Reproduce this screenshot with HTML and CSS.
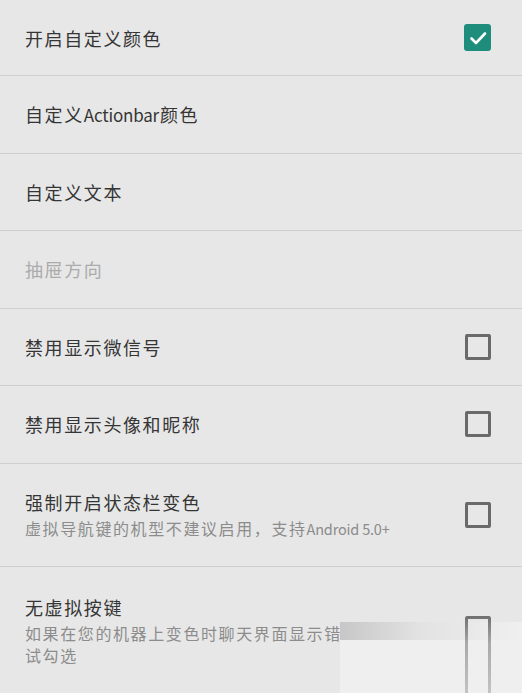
FILE: index.html
```html
<!DOCTYPE html>
<html lang="zh-CN">
<head>
<meta charset="utf-8">
<title>设置</title>
<link rel="stylesheet" href="styles.css">
</head>
<body>
<div class="list">
  <div class="row first">
    <div class="text"><div class="title">开启自定义颜色</div></div>
    <div class="check on">
      <svg viewBox="0 0 26 26" width="26" height="26"><path d="M6.5 13.5 L11 18 L20 8.5" fill="none" stroke="#ffffff" stroke-width="2.6" stroke-linecap="round" stroke-linejoin="round"/></svg>
    </div>
  </div>
  <div class="row">
    <div class="text"><div class="title">自定义<span class="latin">Actionbar</span>颜色</div></div>
  </div>
  <div class="row">
    <div class="text"><div class="title">自定义文本</div></div>
  </div>
  <div class="row">
    <div class="text"><div class="title disabled">抽屉方向</div></div>
  </div>
  <div class="row">
    <div class="text"><div class="title">禁用显示微信号</div></div>
    <div class="check"></div>
  </div>
  <div class="row">
    <div class="text"><div class="title">禁用显示头像和昵称</div></div>
    <div class="check"></div>
  </div>
  <div class="row tall">
    <div class="text">
      <div class="title">强制开启状态栏变色</div>
      <div class="sub">虚拟导航键的机型不建议启用，支持<span class="latin">Android 5.0+</span></div>
    </div>
    <div class="check"></div>
  </div>
  <div class="row last">
    <div class="text">
      <div class="title">无虚拟按键</div>
      <div class="sub narrow">如果在您的机器上变色时聊天界面显示错误，请尝试勾选</div>
    </div>
    <div class="check smear"></div>
  </div>
</div>
<div class="veil"></div>
</body>
</html>
```

FILE: styles.css
```css
html, body {
  margin: 0;
  padding: 0;
  background: #e7e7e7;
  overflow: hidden;
}
body {
  width: 522px;
  height: 693px;
  position: relative;
  font-family: "Noto Sans CJK SC", "Noto Sans", sans-serif;
}
.list {
  display: flex;
  flex-direction: column;
}
.row {
  display: flex;
  align-items: center;
  height: 76.5px;
  padding: 0 31px 0 25px;
  border-bottom: 1px solid #cfcfcf;
  box-sizing: content-box;
}
.row.first {
  height: 75px;
}
.row.tall {
  height: 102px;
}
.row.last {
  height: auto;
  align-items: flex-start;
  padding-top: 27px;
  padding-bottom: 27px;
  border-bottom: none;
}
.text {
  flex: 1;
  min-width: 0;
}
.title {
  font-size: 18px;
  line-height: 26px;
  letter-spacing: 1.6px;
  color: #353535;
}
.title .latin {
  font-size: 17px;
  letter-spacing: -0.2px;
  margin-right: 1px;
}
.title.disabled {
  color: #ababab;
}
.sub {
  margin-top: 2px;
  font-size: 16px;
  line-height: 22px;
  letter-spacing: 1.6px;
  color: #8c8c8c;
}
.sub .latin {
  font-size: 14.5px;
  letter-spacing: -0.2px;
}
.sub.narrow {
  max-width: 395px;
}
.check {
  flex: none;
  width: 20px;
  height: 20px;
  border: 3px solid #6a6a6a;
  border-radius: 2px;
  margin-left: 16px;
}
.check.on {
  width: 27px;
  height: 27px;
  border: none;
  background: #1f8d7c;
  border-radius: 3px;
  display: flex;
  align-items: center;
  justify-content: center;
}
.check.on svg {
  display: block;
}
.check.smear {
  position: relative;
  z-index: 2;
  margin-top: 22px;
  height: 74px;
  border-bottom: none;
  border-color: #707070;
  border-radius: 2px 2px 0 0;
  -webkit-mask-image: linear-gradient(180deg, #000 0%, rgba(0,0,0,0.55) 35%, rgba(0,0,0,0.35) 100%);
  mask-image: linear-gradient(180deg, #000 0%, rgba(0,0,0,0.55) 35%, rgba(0,0,0,0.35) 100%);
}
.veil {
  position: absolute;
  z-index: 1;
  left: 340px;
  top: 622px;
  right: 0;
  bottom: 0;
  background:
    linear-gradient(90deg, rgba(150,150,150,0.45) 0%, rgba(190,190,190,0.25) 45%, rgba(230,230,230,0) 100%) 0 0 / 180px 18px no-repeat,
    #efefef;
}
```
